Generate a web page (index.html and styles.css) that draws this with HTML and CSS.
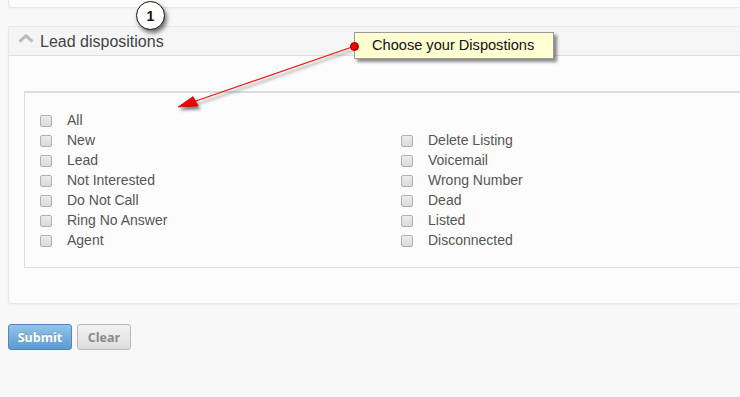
FILE: index.html
```html
<!DOCTYPE html>
<html>
<head>
<meta charset="utf-8">
<link rel="stylesheet" href="styles.css">
</head>
<body>
<div class="top-panel"></div>
<div class="panel">
  <div class="panel-heading">
    <svg class="chevron" width="16" height="9" viewBox="0 0 16 9"><polyline points="1.5,7.5 8,1.8 14.5,7.5" fill="none" stroke="#bbb" stroke-width="3"/></svg>
    <span class="title">Lead dispositions</span>
  </div>
  <div class="panel-body">
    <div class="box">
      <div class="list">
        <label class="item full"><span class="cb"></span>All</label>
        <div class="col">
          <label class="item"><span class="cb"></span>New</label>
          <label class="item"><span class="cb"></span>Lead</label>
          <label class="item"><span class="cb"></span>Not Interested</label>
          <label class="item"><span class="cb"></span>Do Not Call</label>
          <label class="item"><span class="cb"></span>Ring No Answer</label>
          <label class="item"><span class="cb"></span>Agent</label>
        </div>
        <div class="col">
          <label class="item"><span class="cb"></span>Delete Listing</label>
          <label class="item"><span class="cb"></span>Voicemail</label>
          <label class="item"><span class="cb"></span>Wrong Number</label>
          <label class="item"><span class="cb"></span>Dead</label>
          <label class="item"><span class="cb"></span>Listed</label>
          <label class="item"><span class="cb"></span>Disconnected</label>
        </div>
      </div>
    </div>
  </div>
</div>
<div class="actions">
  <button class="btn btn-primary">Submit</button>
  <button class="btn btn-default">Clear</button>
</div>

<svg class="annot" width="740" height="397" viewBox="0 0 740 397">
  <defs>
    <filter id="sh" x="-50%" y="-50%" width="200%" height="200%">
      <feGaussianBlur in="SourceAlpha" stdDeviation="1.5"/>
      <feOffset dx="2" dy="3" result="b"/>
      <feComponentTransfer><feFuncA type="linear" slope="0.5"/></feComponentTransfer>
      <feMerge><feMergeNode/><feMergeNode in="SourceGraphic"/></feMerge>
    </filter>
  </defs>
  <g filter="url(#sh)">
    <line x1="355" y1="46" x2="193" y2="102" stroke="#f01010" stroke-width="1.2"/>
    <polygon points="178,107 193,96.5 198,106" fill="#ee0000" stroke="#b00000" stroke-width="0.6"/>
  </g>
</svg>
<div class="badge">1</div>
<div class="tip">Choose your Dispostions<span class="dot"></span></div>
</body>
</html>
```
FILE: styles.css
```css
html, body {
  margin: 0;
  padding: 0;
}
body {
  background: #f8f8f8;
  font-family: Arial, "Liberation Sans", sans-serif;
  width: 740px;
  height: 397px;
  overflow: hidden;
  position: relative;
}
.top-panel {
  margin: -10px 0 0 8px;
  height: 16px;
  background: #fcfcfc;
  border: 1px solid #e6e6e6;
  border-right: none;
  border-radius: 3px 0 0 3px;
  box-shadow: 0 1px 2px rgba(0,0,0,0.04);
}
.panel {
  margin: 18px 0 0 8px;
  background: #fcfcfc;
  border: 1px solid #e8e8e8;
  border-right: none;
  border-radius: 3px 0 0 3px;
  box-shadow: 0 1px 2px rgba(0,0,0,0.05);
}
.panel-heading {
  height: 28px;
  background: #f5f5f5;
  border-bottom: 1px solid #dedede;
  display: flex;
  align-items: center;
  padding-left: 9px;
  border-radius: 3px 0 0 0;
}
.chevron {
  margin-top: -6px;
  margin-right: 6px;
}
.title {
  font-size: 16px;
  color: #444;
  margin-top: 2px;
}
.panel-body {
  padding: 35px 0 35px 15px;
}
.box {
  border: 1px solid #dcdcdc;
  border-top: 2px solid #dcdcdc;
  border-right: none;
  padding: 17px 0 17px 15px;
  background: #fcfcfc;
}
.list {
  display: grid;
  grid-template-columns: 361px 1fr;
}
.full {
  grid-column: 1 / 3;
}
.item {
  display: flex;
  align-items: center;
  height: 20px;
  font-size: 14px;
  color: #555;
}
.cb {
  width: 10px;
  height: 10px;
  border: 1px solid #b0b0b0;
  border-radius: 2px;
  background: linear-gradient(#ececec, #dadada);
  margin-right: 15px;
  flex: none;
  margin-top: 1px;
}
.actions {
  display: flex;
  gap: 5px;
  margin: 20px 0 0 8px;
}
.btn {
  font-family: "Open Sans", Arial, sans-serif;
  font-weight: bold;
  font-size: 12.5px;
  height: 26px;
  padding: 0;
  border-radius: 3px;
}
.btn-primary {
  width: 64px;
  color: #fff;
  background: linear-gradient(#93c3ea, #5b9bd3);
  border: 1px solid #4f89bd;
  text-shadow: 0 -1px 0 rgba(0,0,0,0.15);
}
.btn-default {
  width: 54px;
  color: #8a8a8a;
  background: linear-gradient(#f3f3f3, #dddddd);
  border: 1px solid #b8b8b8;
}
.annot {
  position: absolute;
  left: 0;
  top: 0;
  pointer-events: none;
}
.badge {
  position: absolute;
  left: 136px;
  top: 1px;
  width: 27px;
  height: 27px;
  border: 1.5px solid #111;
  border-radius: 50%;
  background: #fff;
  box-shadow: 2px 3px 4px rgba(0,0,0,0.55);
  font: bold 14px Arial, "Liberation Sans", sans-serif;
  color: #111;
  display: flex;
  align-items: center;
  justify-content: center;
}
.tip {
  position: absolute;
  left: 354px;
  top: 32px;
  width: 200px;
  height: 27px;
  box-sizing: border-box;
  background: #ffffd2;
  border: 1px solid #9a9a9a;
  box-shadow: 3px 3px 3px rgba(0,0,0,0.45);
  font: 14.6px Arial, "Liberation Sans", sans-serif;
  color: #111;
  padding-left: 17px;
  line-height: 25px;
}
.dot {
  position: absolute;
  left: -5px;
  top: 9px;
  width: 7px;
  height: 7px;
  border-radius: 50%;
  background: #ee0000;
  border: 1px solid #900;
}
```
